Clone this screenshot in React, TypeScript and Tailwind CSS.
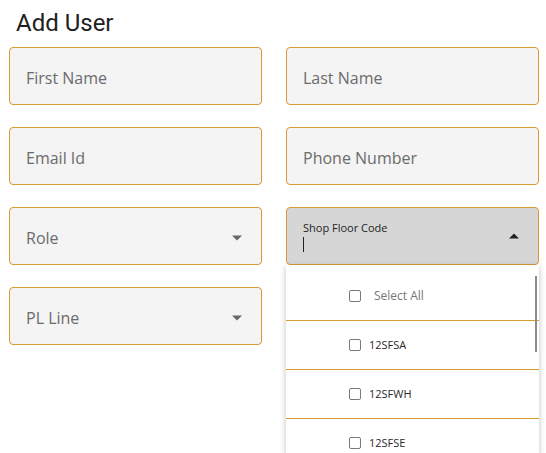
import React from "react";

const fieldBase =
  "h-[58px] rounded-[4px] border border-[#d89a33] flex items-center px-4 pt-[3px] text-[16px] text-[#6b6b6b]";

function Field({ label }: { label: string }) {
  return (
    <div className={`${fieldBase} bg-[#f4f4f4]`}>
      <span>{label}</span>
    </div>
  );
}

function Caret({ up }: { up?: boolean }) {
  return (
    <svg width="10" height="6" viewBox="0 0 10 6" aria-hidden="true">
      {up ? <path d="M0 5.5L5 0.5L10 5.5z" fill="#222" /> : <path d="M0 0.5L5 5.5L10 0.5z" fill="#666" />}
    </svg>
  );
}

function SelectField({ label }: { label: string }) {
  return (
    <div className={`${fieldBase} bg-[#f4f4f4] justify-between pr-[19px]`}>
      <span>{label}</span>
      <Caret />
    </div>
  );
}

const options = ["12SFSA", "12SFWH", "12SFSE"];

export default function App() {
  return (
    <div
      className="relative w-[546px] h-[453px] overflow-hidden bg-white"
      style={{ fontFamily: '"Open Sans", sans-serif' }}
    >
      <h1
        className="pl-4 pt-[7px] h-[47px] text-[24px] leading-[32px] text-[#212121]"
        style={{ fontFamily: "Roboto, sans-serif" }}
      >
        Add User
      </h1>

      <div className="grid grid-cols-[253px_253px] gap-x-6 gap-y-[22px] pl-[9px]">
        <Field label="First Name" />
        <Field label="Last Name" />
        <Field label="Email Id" />
        <Field label="Phone Number" />
        <SelectField label="Role" />
        {/* Open multi-select */}
        <div className="h-[58px] rounded-[4px] border border-[#d89a33] bg-[#d6d6d6] flex items-center justify-between pl-4 pr-[19px]">
          <div className="flex flex-col">
            <span className="text-[11px] leading-[14px] text-[#1e1e1e]">Shop Floor Code</span>
            <span className="mt-[2px] h-[15px] w-px bg-[#222]" />
          </div>
          <div className="-mt-[1px]">
            <Caret up />
          </div>
        </div>
        <SelectField label="PL Line" />
      </div>

      <div className="absolute left-[286px] top-[265px] w-[253px] h-[188px] overflow-hidden bg-white pt-[7px] shadow-[0_2px_6px_rgba(0,0,0,0.25)]">
        <div className="flex h-[49px] items-center border-b border-[#d89a33] pl-[63px]">
          <span className="h-[12px] w-[12px] rounded-[2px] border-[1.5px] border-[#7a7a7a]" />
          <span className="ml-[13px] text-[12px] text-[#777]">Select All</span>
        </div>
        {options.map((o) => (
          <div key={o} className="flex h-[49px] items-center border-b border-[#d89a33] pl-[63px]">
            <span className="h-[12px] w-[12px] rounded-[2px] border-[1.5px] border-[#7a7a7a]" />
            <span className="ml-[8px] text-[11px] text-[#2a2a2a]">{o}</span>
          </div>
        ))}
        <div className="absolute right-[2px] top-[11px] h-[76px] w-[2px] bg-[#8a8a8a]" />
      </div>
    </div>
  );
}
